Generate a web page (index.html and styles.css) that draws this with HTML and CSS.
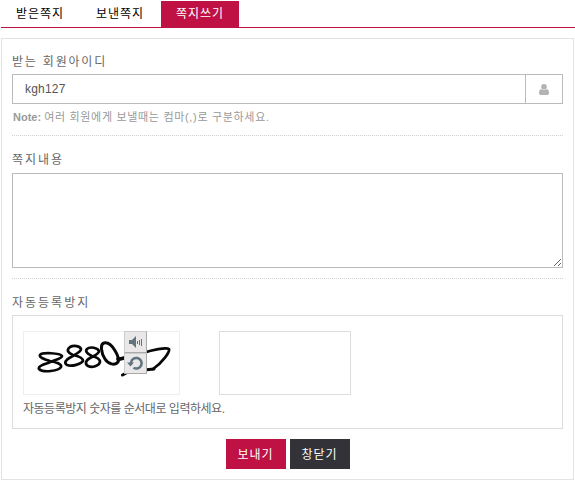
FILE: index.html
```html
<!DOCTYPE html>
<html lang="ko">
  <head>
    <meta charset="UTF-8" />
    <meta name="viewport" content="width=device-width, initial-scale=1.0" />
    <title>쪽지쓰기</title>
    <link rel="stylesheet" href="styles.css">
  </head>
  <body>
    <ul class="tabs">
      <li><a href="#">받은쪽지</a></li>
      <li><a href="#">보낸쪽지</a></li>
      <li class="active"><a href="#">쪽지쓰기</a></li>
    </ul>

    <form class="panel">
      <div class="section">
        <label class="label" for="memberId">받는 회원아이디</label>
        <div class="input-group">
          <input type="text" id="memberId" value="kgh127" />
          <span class="addon">
            <svg width="10" height="11" viewBox="0 0 10 11">
              <circle cx="5" cy="2.8" r="2.8" />
              <path d="M2.3 5Q0 5.5 0 9Q0 11 1.500 11H8.500Q10 11 10 9Q10 5.500 7.700 5Q5 7 2.300 5Z" />
            </svg>
          </span>
        </div>
        <p class="note"><b>Note:</b> <span>여러 회원에게 보낼때는 컴마(,)로 구분하세요.</span></p>
      </div>

      <div class="section">
        <label class="label" for="memo">쪽지내용</label>
        <textarea id="memo"></textarea>
      </div>

      <div class="section last">
        <label class="label" for="captchaKey">자동등록방지</label>
        <div class="captcha">
          <div class="captcha-row">
            <div class="captcha-img">
              <svg class="digits" width="155" height="62" viewBox="24 332 155 62">
                <g fill="none" stroke="#080808" stroke-width="2.7" stroke-linecap="round" stroke-linejoin="round">
                  <path d="M50 361C43 359 39 357 40 355C42 352 60 353 62 356C62 359 54 360 48 363C41 365 38 367 39 369C43 373 59 371 61 367C62 364 56 362 50 361Z" />
                  <path d="M73 355C68 353 66 350 70 347C74 345 80 346 81 349C81 352 76 354 71 357C65 360 64 363 67 365C72 367 81 364 83 361C83 358 78 356 73 355Z" />
                  <path d="M92 356C87 354 85 351 87 349C90 346 98 348 99 351C99 354 94 356 90 358C85 361 85 364 88 366C92 368 99 366 100 362C100 359 96 357 92 356Z" />
                  <path stroke-width="3" d="M104 343C100 344 101 353 105 359C108 364 115 366 118 362C120 358 112 341 104 343Z" />
                  <path stroke-width="3.8" d="M118 359L120 359L128 357" />
                  <path stroke-width="3" d="M122.500 375L130 371" />
                  <path d="M143 353C152 350 166 347 169 349C170 352 162 363 153 369" />
                  <path stroke-width="3" d="M154 369L144 370" />
                </g>
              </svg>
              <div class="captcha-btns">
                <button type="button" aria-label="음성으로 듣기">
                  <svg width="19" height="19" viewBox="0 0 19 19">
                    <path fill="#5f747c" d="M3 7H6L10 3V15L6 11H3Z" />
                    <path fill="none" stroke="#5f747c" d="M11.500 8V11M13.500 7V12M15.500 6V13" />
                  </svg>
                </button>
                <button type="button" aria-label="새로고침">
                  <svg width="19" height="19" viewBox="0 0 19 19">
                    <path fill="none" stroke="#5f747c" stroke-width="2.500" d="M5 9A5.300 5.300 0 1 1 7.500 13.700" />
                    <path fill="#5f747c" d="M1 8.500H8L4.500 12.500Z" />
                  </svg>
                </button>
              </div>
            </div>
            <input type="text" id="captchaKey" class="captcha-key" />
          </div>
          <p class="captcha-msg">자동등록방지 숫자를 순서대로 입력하세요.</p>
        </div>
      </div>

      <div class="buttons">
        <button type="submit" class="btn btn-send">보내기</button>
        <button type="button" class="btn btn-close">창닫기</button>
      </div>
    </form>
  </body>
</html>
```

FILE: styles.css
```css
* {
  box-sizing: border-box;
}

body {
  margin: 0;
  padding: 1px 0 0 1px;
  height: 480px;
  overflow: hidden;
  background: #fff;
  color: #666;
  font-family: "Liberation Sans", "Noto Sans CJK KR", sans-serif;
  font-size: 12px;
}

p,
ul {
  margin: 0;
  padding: 0;
}

button,
input,
textarea {
  font-family: inherit;
  font-size: 12px;
  outline: none;
}

.tabs {
  display: flex;
  height: 27px;
  list-style: none;
  border-bottom: 1px solid #bf1144;
}

.tabs li {
  width: 80px;
}

.tabs a {
  display: block;
  height: 26px;
  padding-left: 15px;
  line-height: 27px;
  color: #000;
  text-decoration: none;
  letter-spacing: 1px;
  white-space: nowrap;
}

.tabs .active {
  width: 78px;
  background: #bf1144;
}

.tabs .active a {
  color: #fff;
}

.panel {
  width: 573px;
  height: 442px;
  margin-top: 10px;
  padding: 0 10px;
  border: 1px solid #e3e3e3;
}

.section {
  height: 97px;
  padding-top: 13px;
  border-bottom: 1px dotted #d0d0d0;
}

.section + .section {
  height: 143px;
}

.section.last {
  height: 151px;
  border-bottom: 0;
}

.label {
  display: block;
  height: 22px;
  line-height: 20px;
  letter-spacing: 1.8px;
}

.section + .section .label {
  height: 24px;
  line-height: 22px;
  letter-spacing: 2px;
}

.section.last .label {
  height: 23px;
}

.input-group {
  display: flex;
  height: 30px;
  border: 1px solid #bbb;
}

.input-group input {
  flex: 1;
  padding: 0 12px;
  border: 0;
  color: #555;
  letter-spacing: 0.2px;
}

.addon {
  display: flex;
  align-items: center;
  justify-content: center;
  width: 37px;
  border-left: 1px solid #bbb;
  fill: #b3b3b3;
}

.note {
  padding-left: 1px;
  line-height: 27px;
  font-size: 11px;
  color: #999;
  white-space: nowrap;
}

.note span {
  letter-spacing: 0.68px;
}

textarea {
  display: block;
  width: 551px;
  height: 95px;
  border: 1px solid #bbb;
}

.captcha {
  height: 114px;
  padding: 15px 10px 0;
  border: 1px solid #ddd;
}

.captcha-row {
  display: flex;
  gap: 39px;
}

.captcha-img {
  position: relative;
  width: 157px;
  height: 64px;
  border: 1px solid #eee;
}

.digits {
  display: block;
  filter: blur(0.35px);
}

/* audio / reload buttons sit over the image */
.captcha-btns {
  position: absolute;
  top: -1px;
  left: 100px;
  width: 23px;
}

.captcha-btns button {
  display: block;
  width: 23px;
  height: 22px;
  padding: 0 1px;
  border: 1px solid #aaa;
  border-top-color: #ccc;
  border-left-color: #ccc;
  background: #e9e7e8;
}

.captcha-btns svg {
  display: block;
}

.captcha-btns button + button {
  height: 21px;
}

.captcha-key {
  width: 132px;
  height: 64px;
  border: 1px solid #ddd;
}

.captcha-msg {
  line-height: 28px;
  letter-spacing: -0.48px;
  white-space: nowrap;
}

.buttons {
  display: flex;
  justify-content: center;
  gap: 4px;
  padding-top: 9px;
}

.btn {
  width: 60px;
  height: 30px;
  padding: 0 0 2px;
  border: 0;
  color: #fff;
  letter-spacing: 0.9px;
}

.btn-send {
  background: #bf1144;
}

.btn-close {
  background: #333238;
}
```
